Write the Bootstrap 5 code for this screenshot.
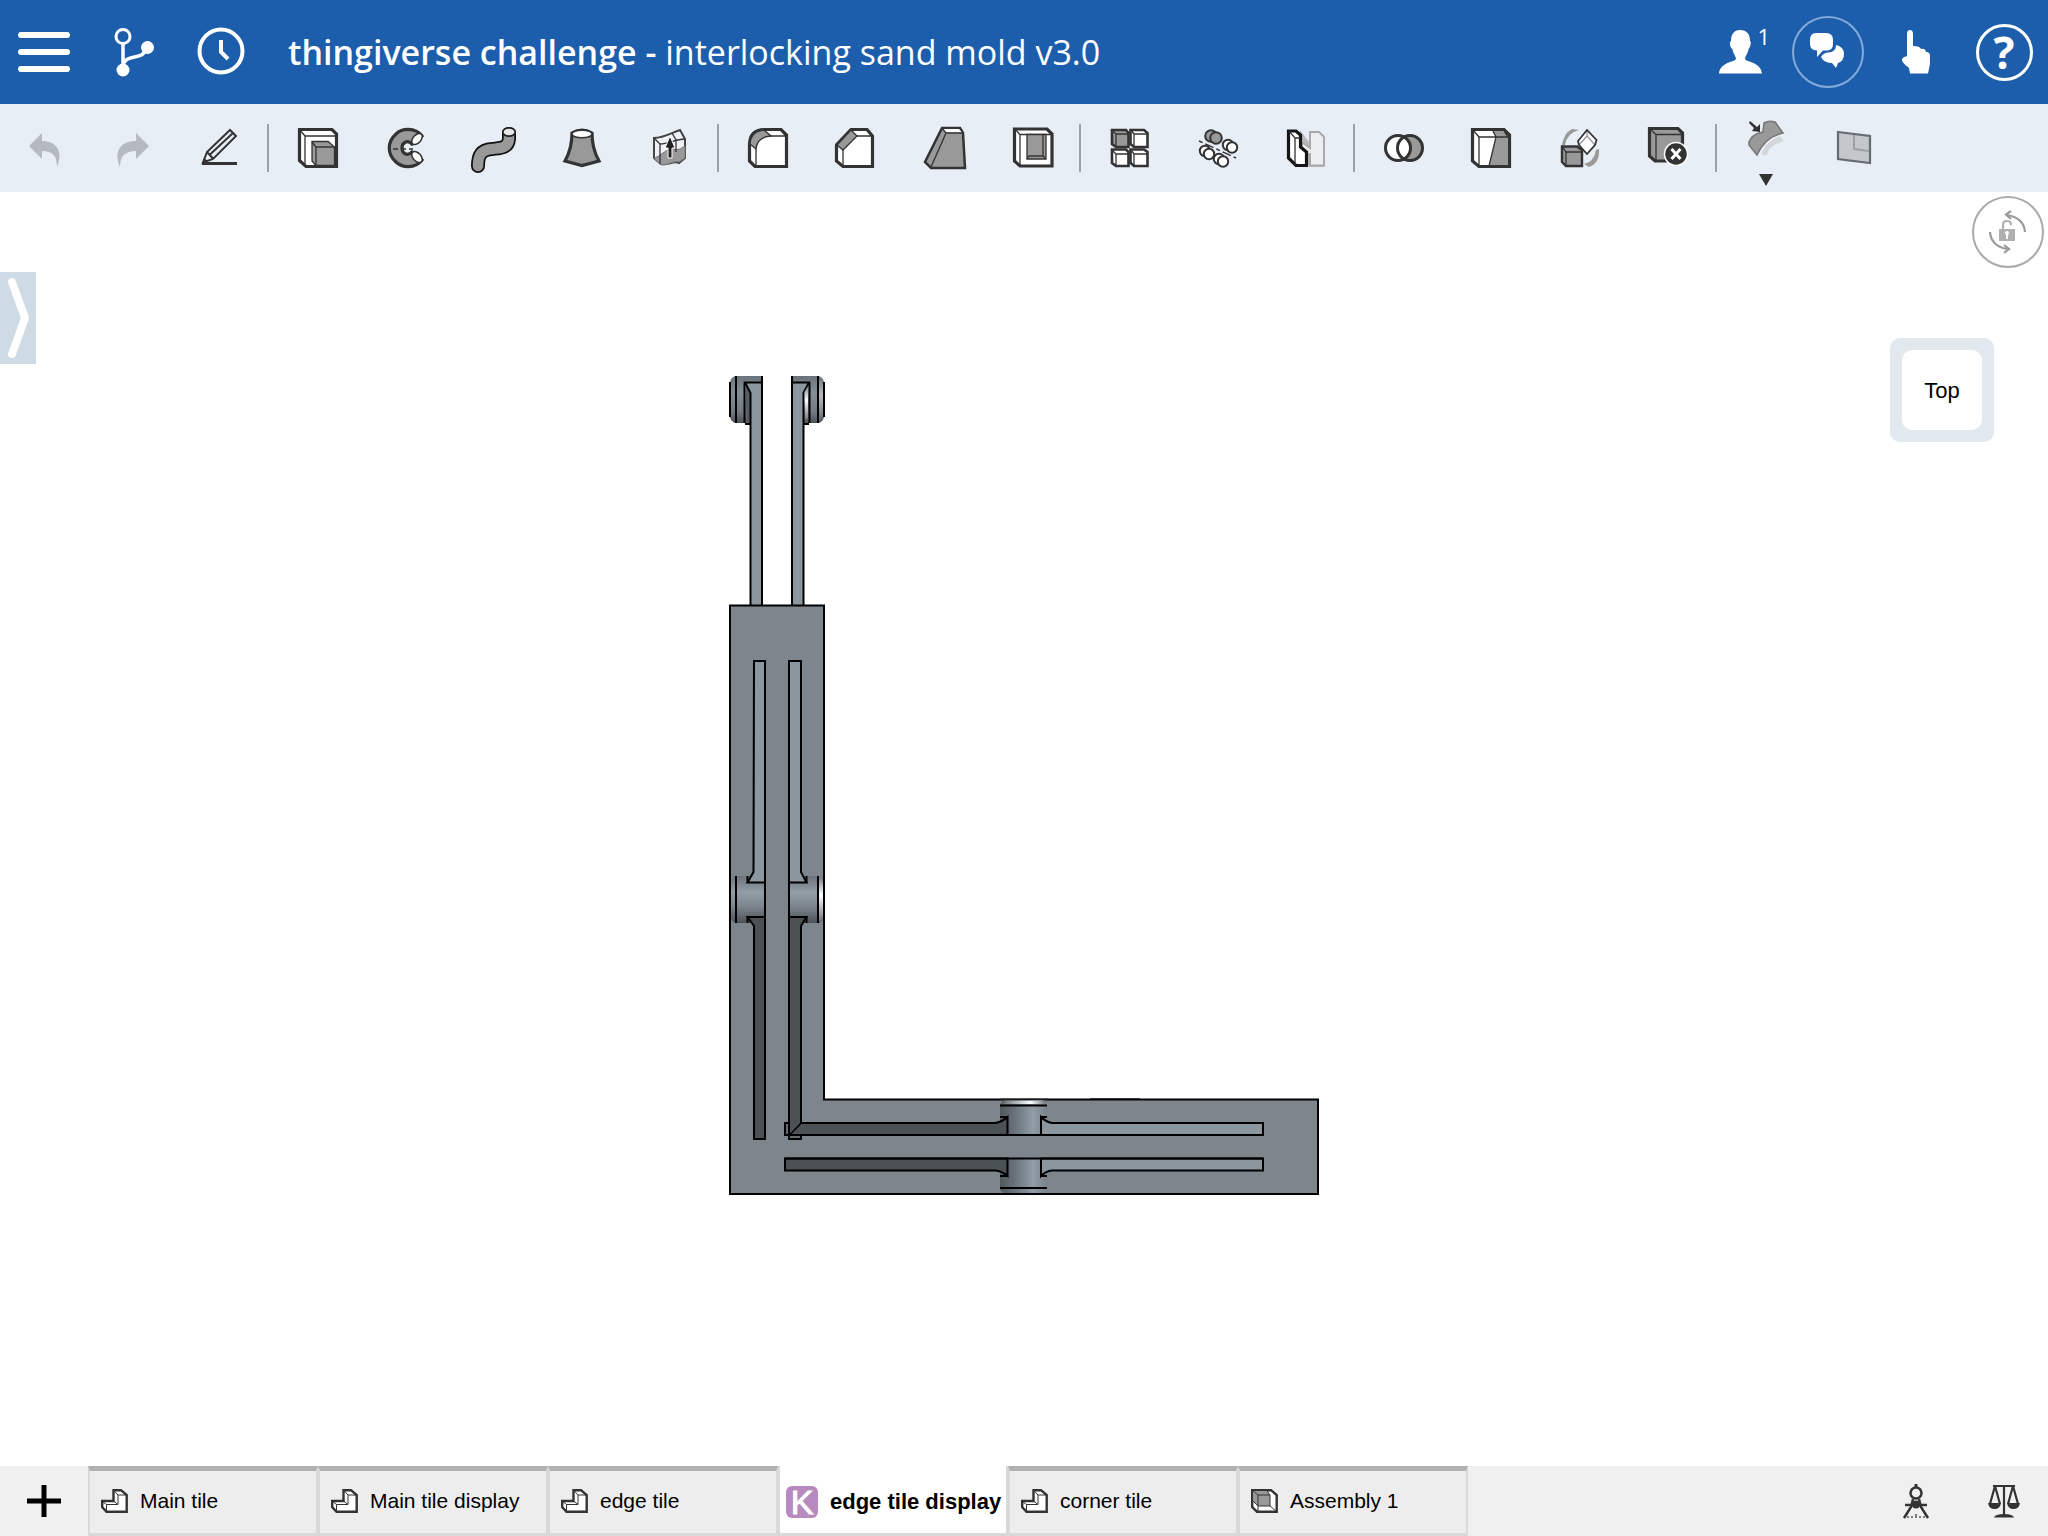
<!DOCTYPE html>
<html lang="en">
<head>
<meta charset="utf-8">
<meta name="viewport" content="width=device-width, initial-scale=1">
<title>thingiverse challenge - interlocking sand mold v3.0</title>
<link href="https://cdn.jsdelivr.net/npm/bootstrap@5.3.0/dist/css/bootstrap.min.css" rel="stylesheet">
<style>
  body { font-family: "Liberation Sans", Arial, sans-serif; color: #000; background: #fff; }
  svg { display: block; flex: none; overflow: visible; }
  .cell { width: 88px; flex: none; padding: 0; border: 0; border-radius: 0; background: none; color: inherit; display: flex; align-items: center; justify-content: center; }
  .app-header { height: 104px; background: #1c5eac; color: #fff; font-family: "Open Sans", sans-serif; }
  .doc-title { font-size: 34px; line-height: 44px; font-weight: 400; color: #fff; }
  .doc-title strong { font-weight: 600; }
  .user-count { position: absolute; top: -8px; right: -8px; font-size: 22px; line-height: 28px; }
  .ring { width: 72px; height: 72px; border: 2px solid #84aadb; border-radius: 50%; }
  .ring-help { width: 57px; height: 57px; border: 3px solid #fff; border-radius: 50%; font: 700 44px/50px "Open Sans", sans-serif; }
  .tool-bar { height: 88px; background: #e7eef6; }
  .tool-sep { width: 2px; height: 48px; margin: 0 5px 0 3px; background: #9ba1aa; flex: none; }
  .k { stroke: #333; stroke-width: 3.2; stroke-linejoin: miter; fill: #fff; }
  .t { stroke: #333; stroke-width: 1.3; fill: none; }
  .g { fill: #999; }
  .drawer-handle { position: absolute; left: 0; top: 80px; width: 36px; height: 92px; padding: 0; border: 0; background: #cfdbe4; }
  .spin-lock { position: absolute; right: 4px; top: 4px; width: 72px; height: 72px; padding: 0; border: 2px solid #aaa; border-radius: 50%; background: #fff; }
  .view-cube { position: absolute; right: 54px; top: 146px; width: 104px; height: 104px; padding: 12px; border: 0; border-radius: 10px; background: #e1e8ee; }
  .view-face { height: 80px; border-radius: 10px; background: #fff; font-size: 22px; line-height: 82px; color: #000; }
  .model-area { padding-bottom: 84px; }
  .model-area svg { stroke-linejoin: miter; }
  .ln { stroke: #000; stroke-width: 2; fill: none; }
  .bottom-bar { height: 70px; background: #f0f0f0; }
  .doc-tab { width: 230px; height: 70px; padding: 0 0 2px 11px; gap: 12px; display: flex; align-items: center; text-align: left; font-size: 21px; line-height: 28px; white-space: nowrap; color: #000; background: #ededed; border: solid #d9d9d9; border-width: 5px 2px 3px; border-top-color: #b1b1b1; }
  .doc-tab.current { background: #fff; border-width: 0 2px 3px; padding: 5px 0 0 6px; font-size: 22px; font-weight: 700; }
  .k-mark { width: 32px; height: 32px; border-radius: 6px; background: #b78ac0; color: #fff; font-weight: 400; font-size: 34px; line-height: 33px; text-align: center; flex: none; -webkit-text-stroke: 1px #fff; }
</style>
<script src="https://cdn.jsdelivr.net/npm/bootstrap@5.3.0/dist/js/bootstrap.bundle.min.js"></script>
</head>
<body class="d-flex flex-column vh-100 overflow-hidden">

<header class="app-header d-flex align-items-stretch">
  <button class="cell" type="button" aria-label="Menu"><svg width="52" height="44" viewBox="0 0 52 44"><path d="M3 5H49M3 22H49M3 39H49" stroke="#fff" stroke-width="6" stroke-linecap="round"/></svg></button>
  <button class="cell" type="button" aria-label="Versions"><svg width="48" height="48" viewBox="0 0 48 48"><g fill="none" stroke="#fff" stroke-width="3"><circle cx="15" cy="8.500" r="7"/><path d="M15 15V40M15 38C17 24 36 34 38 20" stroke-width="3.500"/></g><circle cx="39.500" cy="19.500" r="6.500" fill="#fff"/><circle cx="15" cy="42" r="6.500" fill="#fff"/></svg></button>
  <button class="cell" type="button" aria-label="History"><svg width="48" height="48" viewBox="0 0 48 48"><circle cx="25" cy="23" r="21.500" fill="none" stroke="#fff" stroke-width="4"/><path d="M25 12V24L32 31" fill="none" stroke="#fff" stroke-width="4"/></svg></button>
  <h1 class="doc-title m-0 ps-4 align-self-center flex-grow-1 text-nowrap"><strong>thingiverse challenge - </strong>interlocking sand mold v3.0</h1>
  <button class="cell" type="button" aria-label="Collaborators">
    <span class="position-relative"><svg width="44" height="44" viewBox="0 0 44 44"><path fill="#fff" d="M22 0C29 0 32 4 32 11C34 12 32 18 30.500 19C30 24 27 26 27 29C28 32 43 32 44 43.500H1C2 32 17 32 18 29C18 26 15 24 14.500 19C12 18 11 12 13 11C13 4 16 0 22 0Z"/></svg><span class="user-count">1</span></span>
  </button>
  <button class="cell" type="button" aria-label="Comments"><span class="ring d-flex align-items-center justify-content-center"><svg width="36" height="36" viewBox="1 1 36 36"><path fill="#fff" d="M7 0H17Q24 0 24 7V11Q24 17 18 17.500H14L8 24V17.500Q1 17 1 11V7Q1 0 7 0Z"/><path fill="#fff" d="M27 12Q35 14 35 21Q35 28 29 30L27 35L23 30Q15 30 12 24Q15 19 20 19.500Q27 19 27 12Z"/></svg></span></button>
  <button class="cell" type="button" aria-label="Touch mode"><svg width="30" height="44" viewBox="0 0 30 44"><path fill="#fff" d="M6 4Q6 0 9 0T12 4V16Q19 16 20 19Q24 18 25 22Q29 22 29 26V34L27 43.500H9L8 38Q0 32 1 29Q2 27 6 26Z"/></svg></button>
  <button class="cell" type="button" aria-label="Help"><span class="ring-help text-center">?</span></button>
</header>

<div class="tool-bar d-flex align-items-stretch" role="toolbar" aria-label="Features">
  <button class="cell" type="button" aria-label="Undo"><svg width="48" height="48"><path fill="#b5b9c1" d="M9 22L22 9V17C36 17 44 27 37 43C37 32 33 27 22 27V35Z"/></svg></button>
  <button class="cell" type="button" aria-label="Redo"><svg width="48" height="48"><path fill="#b5b9c1" d="M41 22L28 9V17C13 17 5 27 12 43C12 32 17 27 28 27V35Z"/></svg></button>
  <button class="cell" type="button" aria-label="Sketch"><svg width="48" height="48"><path d="M6 39.500H41" stroke="#333" stroke-width="3"/><path fill="none" stroke="#333" stroke-width="2" d="M7 38.500L11 28L34 6L40 12L17 35ZM11 28L17 34.500M14 30.500L37 9"/><path d="M6 40L8 34L12 37Z" fill="#333"/></svg></button>
  <span class="tool-sep align-self-center"></span>
  <button class="cell" type="button" aria-label="Extrude"><svg width="48" height="48"><path class="k" d="M5.500 5.500H38L42.500 10V42.500H12L5.500 36.500Z"/><path class="t" d="M5 5L11 12H42M11 12V42"/><path class="t g" d="M18 17.500H34L40.500 23V41.500H22L18 37Z"/><path class="t" d="M18 18L22 23H40M22 23V41"/></svg></button>
  <button class="cell" type="button" aria-label="Revolve"><svg width="48" height="48"><path class="k" style="fill:#999" d="M40 12C33 3 20 4 14 10C5 18 5 30 14 38C20 44 33 45 40 36L30 28C25 33 20 29 20 24S25 15 30 20Z"/><ellipse cx="35" cy="15" rx="4" ry="6.500" transform="rotate(42 35 15)" fill="#fff" stroke="#333" stroke-width="1.500"/><ellipse cx="35" cy="33" rx="4" ry="6.500" transform="rotate(-42 35 33)" fill="#fff" stroke="#333" stroke-width="1.500"/><path class="t" d="M11 25H16M20 25H24M27 25H31" stroke-width="2"/></svg></button>
  <button class="cell" type="button" aria-label="Sweep"><svg width="48" height="48" fill="none" stroke-linecap="round"><path d="M39 10V15C38 25 29 24 22 25C11 26 8 31 8 42" stroke="#111" stroke-width="14"/><path d="M39 10V15C38 25 29 24 22 25C11 26 8 31 8 42" stroke="#999" stroke-width="10.500"/><ellipse cx="39" cy="8" rx="6.200" ry="4.200" fill="#e6e6e6" stroke="#222" stroke-width="1.800"/></svg></button>
  <button class="cell" type="button" aria-label="Loft"><svg width="48" height="48"><path class="k" style="fill:#999" d="M14 9C14 20 11 30 7 37L24 41.500L41 37C37 30 34 20 34 9Q24 3 14 9Z"/><ellipse cx="24" cy="10" rx="10" ry="3.800" fill="#fff" stroke="#333" stroke-width="1.500"/></svg></button>
  <button class="cell" type="button" aria-label="Thicken"><svg width="48" height="48"><path d="M8 14C18 14 25 9 34 6L39 15V34L33 39C27 36 22 42 15 40L8 34Z" fill="#eef1f5" stroke="#444" stroke-width="2"/><path d="M8 34C16 32 21 23 28 25C34 27 36 23 39 22V34L33 38C26 36 21 43 14 40Z" fill="#999" stroke="#777"/><path class="t" d="M8 14L14 20V40M14 20C23 20 29 15 39 15M26 9L30 16V28"/><path d="M24 12L29 24H26V34H22V24H19Z" fill="#222" stroke="#fff"/></svg></button>
  <span class="tool-sep align-self-center"></span>
  <button class="cell" type="button" aria-label="Fillet"><svg width="48" height="48"><path class="k" d="M20 5.500H37L42.500 11V42.500H11L5.500 37V20Q6 6 20 5.500Z"/><path class="t g" d="M20 6L27 12Q13 13 12 25L6 20Q7 7 20 6Z"/><path class="t" d="M27 12H42M37 6L42 12M12 25V42"/></svg></button>
  <button class="cell" type="button" aria-label="Chamfer"><svg width="48" height="48"><path class="k" d="M19 5.500H35L40.500 12V42.500H11L4.500 37V21Z"/><path class="t g" d="M19 6L25 12L11 26L5 21Z"/><path class="t" d="M25 12H40M35 6L40 12M11 26V42"/></svg></button>
  <button class="cell" type="button" aria-label="Draft"><svg width="48" height="48"><path class="k" style="fill:#999;stroke-width:2.500" d="M22 4H40L43 9L45 44H11L5 38Z"/><path d="M23 5H39L42 8.500H26Z" fill="#fff"/><path class="t" d="M22 4L26 9L11 43M26 9H43"/></svg></button>
  <button class="cell" type="button" aria-label="Shell"><svg width="48" height="48"><path class="k" d="M6.500 5H39L44 10V42H12L6.500 37Z"/><path class="t" d="M7 5L12 10.500H44M12 10.500V42"/><path class="t g" d="M19 10.500H38V35H19Z"/><path class="t" d="M19 35L21 32H35L38 35M35 32V10"/></svg></button>
  <span class="tool-sep align-self-center"></span>
  <button class="cell" type="button" aria-label="Linear pattern"><svg width="48" height="48"><g stroke="#333" stroke-width="2.600" fill="#fff"><path class="g" d="M6 6H20L22.500 9V23H10L6 20Z"/><path d="M24.500 6H38L41.500 9V23H28L24.500 20Z"/><path d="M6 25.500H20L22.500 28V42H10L6 39Z"/><path d="M24.500 25.500H38L41.500 28V42H28L24.500 39Z"/></g><path class="t" d="M6 6L10 10H22M10 10V23M25 6L28 10H41M28 10V23M6 26L10 30H22M10 30V42M25 26L28 30H41M28 30V42"/></svg></button>
  <button class="cell" type="button" aria-label="Circular pattern"><svg width="48" height="48"><g stroke="#333" stroke-width="2" fill="#fff"><circle class="g" cx="17" cy="12" r="5.800"/><circle class="g" cx="22" cy="14" r="5.800"/><circle cx="34" cy="21" r="5.200"/><circle cx="38" cy="23.500" r="5.200"/><circle cx="11" cy="27" r="5.200"/><circle cx="15" cy="30" r="5.200"/><circle cx="25" cy="35" r="5.200"/><circle cx="29" cy="37.500" r="5.200"/></g><path d="M5 17L42 34" stroke="#333" stroke-width="1.500" stroke-dasharray="4 3 9 3"/></svg></button>
  <button class="cell" type="button" aria-label="Mirror"><svg width="48" height="48"><path d="M18 6L27 18V29L42 30V43H28L18 34Z" fill="#bbb"/><path d="M28 8H37L42 13V41.500H28V30L20 32V18L28 24Z" fill="#eceef0" stroke="#aaa" stroke-width="2"/><path class="k" style="stroke:#151515" d="M6.500 7H14L18.500 11V23L24.500 28V41.500H14L6.500 34Z"/><path class="t" d="M7 7L13 14V41M13 14H18"/></svg></button>
  <span class="tool-sep align-self-center"></span>
  <button class="cell" type="button" aria-label="Boolean"><svg width="48" height="48"><circle cx="18" cy="24" r="12.500" fill="#fff"/><circle cx="30" cy="24" r="12.500" class="g"/><path d="M24 13A12.500 12.500 0 0 1 24 35A12.500 12.500 0 0 1 24 13" fill="#fff"/><g fill="none" stroke="#333" stroke-width="3"><circle cx="18" cy="24" r="12.500"/><circle cx="30" cy="24" r="12.500"/></g></svg></button>
  <button class="cell" type="button" aria-label="Split"><svg width="48" height="48"><path class="k" d="M4.500 5.500H36L41.500 11V42.500H11L4.500 37Z"/><path class="g" d="M25 7H35L40 12V41H21L28 13Z"/><path class="t" d="M5 6L11 13H41M11 13V42M25 7L28 13L21 42M36 7L40 13"/></svg></button>
  <button class="cell" type="button" aria-label="Transform"><svg width="48" height="48"><path class="g" d="M6 21Q8 9 16 5L23 6Q11 9 9 21ZM43 25Q44 39 33 43L28 40Q38 38 40 26Z"/><path d="M22 17L31 6L40.500 16L39 21L31 30L23 21Z" fill="#fff" stroke="#333" stroke-width="1.800"/><path class="t" stroke-opacity=".5" d="M31 6V12L23 21M31 12L39 21"/><path class="k" style="fill:#999;stroke-width:2.400" d="M6 22.500H21L26 26V42H10L6 38Z"/><path class="t" d="M6 22L10 28H26M10 28V42"/></svg></button>
  <button class="cell" type="button" aria-label="Delete part"><svg width="48" height="48"><path class="k" style="fill:#999" d="M5.500 4.500H34L38.500 9V37H11L5.500 32Z"/><path class="t" d="M6 5L12 10.500H38M12 10.500V37"/><circle cx="32" cy="30" r="11.500" fill="#333" stroke="#fff" stroke-width="1.500"/><path d="M27.500 25L36.500 35M36.500 25L27.500 35" stroke="#fff" stroke-width="3"/></svg></button>
  <span class="tool-sep align-self-center"></span>
  <button class="cell" type="button" aria-label="Surface tools"><svg width="48" height="80" viewBox="0 -16 48 80"><path d="M20 31Q20 20 38 12L42 17Q27 21 25 31Z" fill="#d4d6d9"/><path class="g" stroke="#777" stroke-width="1.600" d="M7 18Q10 11 17 9L21 8L22 -1Q27 -4 33 -2L41 9Q23 13 15 31L7 21Z"/><path d="M8 -3L15 3L18 0L18 8L10 7L12 4L7 -1Z" fill="#333"/><path d="M17 50H31L24 62Z" fill="#333"/></svg></button>
  <button class="cell" type="button" aria-label="Plane"><svg width="48" height="48"><path d="M8 8L40 12V39L8 35Z" fill="#c4c8cd" stroke="#666b71" stroke-width="2.200"/><path d="M24 11V25L39 27" fill="none" stroke="#9da1a6" stroke-width="2"/></svg></button>
</div>

<main class="position-relative flex-grow-1 overflow-hidden">
  <div class="model-area h-100 d-flex align-items-center justify-content-center">
    <svg width="600" height="830" viewBox="724 372 600 830" role="img" aria-label="Edge tile display, top view">
      <defs>
        <linearGradient id="pv" x1="0" y1="0" x2="0" y2="1"><stop offset="0" stop-color="#6b747d"/><stop offset=".35" stop-color="#949ea8"/><stop offset=".65" stop-color="#7c858e"/><stop offset="1" stop-color="#4c5156"/></linearGradient>
        <linearGradient id="ph" x1="0" y1="0" x2="1" y2="0"><stop offset="0" stop-color="#52575c"/><stop offset=".3" stop-color="#68717a"/><stop offset=".7" stop-color="#929ca6"/><stop offset="1" stop-color="#7a838c"/></linearGradient>
        <linearGradient id="kn" x1="0" y1="0" x2="0" y2="1"><stop offset="0" stop-color="#6b737b"/><stop offset=".35" stop-color="#858e98"/><stop offset=".75" stop-color="#727a83"/><stop offset="1" stop-color="#484d52"/></linearGradient>
        <linearGradient id="shine" x1="0" y1="0" x2="0" y2="1"><stop offset="0" stop-color="#777f88"/><stop offset=".4" stop-color="#fff"/><stop offset="1" stop-color="#6b727a"/></linearGradient>
        <linearGradient id="shineh" x1="0" y1="0" x2="1" y2="0"><stop offset="0" stop-color="#666d75"/><stop offset=".65" stop-color="#fff"/><stop offset="1" stop-color="#6b727a"/></linearGradient>
        <g id="prong">
          <path d="M762 376H735Q730 378 730 383V416Q730 421 735 423H745V424H751V382H762Z" fill="url(#kn)"/>
          <path d="M730 382V417M736 376V423M744.500 383V423M745 424H750" class="ln"/>
          <path d="M745 383L750 394V423H747Z" fill="#555c63"/>
          <path d="M745 382H762V605H751V393Z" fill="#8b969f"/>
          <path d="M750.500 605V393L745 382.500H762M762 376V605" class="ln"/>
        </g>
      </defs>
      <use href="#prong"/>
      <use href="#prong" transform="translate(1554 0) scale(-1 1)"/>
      <path d="M804.500 392L808 386V418L805 421Z" fill="url(#shine)"/>
      <path d="M819 378Q823 381 823 385V414Q823 419 819 421Z" fill="url(#shine)" opacity=".4"/>
      <path d="M730 605.500H824V1099.500H1318V1194H730Z" fill="#7d858d" stroke="#000" stroke-width="2"/>
      <path d="M1000 1099H1048M1090 1098.500H1140" stroke="#333" stroke-width="1"/>

      <path d="M765 876H735Q731 878 731 883V916Q731 921 735 923H765Z" fill="url(#pv)"/>
      <path d="M789 876H819Q823 878 823 883V916Q823 921 819 923H789Z" fill="url(#pv)"/>
      <path d="M819 877Q823 879 823 884V914Q823 920 819 922Z" fill="url(#shine)"/>
      <g class="ln">
        <path d="M754 661H765V882.500H747.500L753.500 872ZM789 661H801V872L806.500 882.500H789Z" fill="#8b969f"/>
        <path d="M747.500 917H765V1139H754V926ZM789 917H806.500L801 926V1139H789Z" fill="#4c5154"/>
        <path d="M736 876V923M818 876V923M747.500 876V883M806.500 876V883M747.500 917V923M806.500 917V923M765 880V920M789 880V920"/>
      </g>

      <path d="M1000 1105Q1002 1100 1007 1100H1041Q1046 1100 1047 1105V1135H1000ZM1000 1158H1047V1189Q1045 1193 1041 1193H1006Q1001 1193 1000 1189Z" fill="url(#ph)"/>
      <path d="M1002 1104Q1004 1101 1008 1101H1040Q1045 1101 1046 1104Z" fill="url(#shineh)"/>
      <g class="ln">
        <path d="M785 1123H789V1135H785ZM789 1135H801V1139H789Z" fill="#666d72"/>
        <path d="M801 1123H995Q1002 1122 1007.500 1117V1135H789ZM785 1158.500H1007.500V1176Q1002 1171 995 1170.500H785Z" fill="#4c5154"/>
        <path d="M1041 1135V1117Q1046 1122 1052 1123H1263V1135ZM1041 1158.500H1263V1170.500H1052Q1046 1171 1041 1176Z" fill="#8b969f"/>
        <path d="M785 1158.500H1263M801 1135H1263M1000 1105.500H1047M1000 1188H1047M1000 1117H1007M1041 1117H1047M1000 1176H1007M1041 1176H1047"/>
      </g>
      <path d="M790 1116H800V1123L790 1134Z" fill="#4c5154"/>
      <path d="M801 1123L789 1135" stroke="#000"/>
    </svg>
  </div>
  <button class="drawer-handle" type="button" aria-label="Open feature list"><svg width="36" height="92"><path d="M12 10L25 46L12 82" fill="none" stroke="#fff" stroke-width="8" stroke-linecap="round" stroke-linejoin="round"/></svg></button>
  <button class="spin-lock d-flex align-items-center justify-content-center" type="button" aria-label="Lock rotation"><svg width="44" height="44" viewBox="1 1 44 44" fill="none" stroke="#999" stroke-width="2.200"><path d="M22 6Q39 9 40 23M26 2L21 5.500L26 10M5 23Q6 37 22 40M19 36L24 40L19 44"/><path d="M18 20V16Q18 12 22 12T26 16" stroke="#b0b0b0"/><path d="M14 20H30V32H14Z" fill="#b0b0b0" stroke="none"/><circle cx="22" cy="24" r="2" fill="#fff" stroke="none"/><path d="M22 25V30" stroke="#fff" stroke-width="2"/></svg></button>
  <button class="view-cube" type="button"><span class="view-face d-block text-center">Top</span></button>
</main>

<footer class="bottom-bar d-flex align-items-stretch">
  <svg width="0" height="0" class="position-absolute" aria-hidden="true"><symbol id="part" viewBox="0 0 27 24"><path d="M12.500 1.200H20L25.700 6V22.700H5.500L1.200 18V12H12.500Z" fill="#fff" stroke="#333" stroke-width="2.400"/><path d="M12.500 1L17 6H25M17 6V15.500H5.500V22M1 12L5.500 15.500M12.500 12L17 15.500" fill="none" stroke="#333" stroke-width="1"/></symbol></svg>
  <button class="cell" type="button" aria-label="New tab"><svg width="34" height="34"><path d="M17 1V33M0 17H34" stroke="#000" stroke-width="5"/></svg></button>
  <nav class="d-flex flex-grow-1" aria-label="Document tabs">
    <button class="doc-tab" type="button"><svg width="27" height="24"><use href="#part"/></svg>Main tile</button>
    <button class="doc-tab" type="button"><svg width="27" height="24"><use href="#part"/></svg>Main tile display</button>
    <button class="doc-tab" type="button"><svg width="27" height="24"><use href="#part"/></svg>edge tile</button>
    <button class="doc-tab current" type="button" aria-current="page"><span class="k-mark">K</span>edge tile display</button>
    <button class="doc-tab" type="button"><svg width="27" height="24"><use href="#part"/></svg>corner tile</button>
    <button class="doc-tab" type="button"><svg width="27" height="24"><path d="M1.200 1.200H20L25.700 6V22.700H6L1.200 18Z" fill="#fff" stroke="#333" stroke-width="2.400"/><path d="M2 2H16L19 6V17H7L2 12Z" fill="#999"/><path d="M1 1L7 6H19V17H7V6M2 12L7 17V22M19 6L16 2M19 17L25 22" fill="none" stroke="#333" stroke-width="1"/></svg>Assembly 1</button>
  </nav>
  <button class="cell" type="button" aria-label="Measure"><svg width="28" height="36"><g fill="none" stroke="#333"><path d="M14 1V5" stroke-width="3"/><circle cx="14" cy="10" r="5.500" stroke-width="2.500"/><path d="M11 16L9 24L2 35M17 16L19 24L26 35" stroke-width="2.500"/><path d="M3 22H25" stroke-width="2.500"/><path d="M6 33V35M10 33V35M14 31V35M18 33V35M22 33V35" stroke-width="1.200"/></g><circle cx="14" cy="21.500" r="4" fill="#333"/></svg></button>
  <button class="cell" type="button" aria-label="Mass properties"><svg width="32" height="34"><g fill="none" stroke="#333" stroke-width="2.200"><path d="M5 2H27M16 2V31M7 2L2 20M7 2L12 20M25 2L20 20M25 2L30 20"/></g><path d="M0 19H13Q12 25 6.500 25T0 19ZM19 19H32Q31 25 25.500 25T19 19ZM6 33.500Q7 30 16 30T26 33.500Z" fill="#333"/></svg></button>
</footer>
</body>
</html>
